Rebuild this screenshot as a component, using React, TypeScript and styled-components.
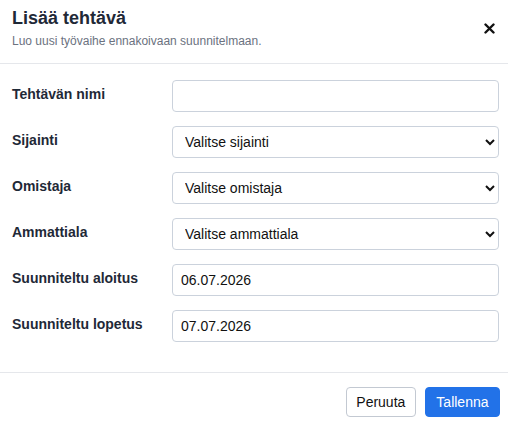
import styled, { createGlobalStyle } from "styled-components";

type FieldProps = {
  label: string;
  children: React.ReactNode;
};

const GlobalStyle = createGlobalStyle`
  body {
    margin: 0;
    background: #ffffff;
    font-family: "Liberation Sans", Arial, sans-serif;
    color: #1f2937;
  }
`;

const Field = ({ label, children }: FieldProps) => (
  <Row>
    <Label>{label}</Label>
    {children}
  </Row>
);

export default function App() {
  return (
    <>
      <GlobalStyle />
      <Dialog>
        <Header>
          <div>
            <Title>Lisää tehtävä</Title>
            <Subtitle>Luo uusi työvaihe ennakoivaan suunnitelmaan.</Subtitle>
          </div>
          <CloseButton aria-label="Sulje">
            <svg width="11" height="11" viewBox="0 0 11 11">
              <path
                d="M1.5 1.5 L9.5 9.5 M9.5 1.5 L1.5 9.5"
                stroke="#111"
                strokeWidth="2.4"
                strokeLinecap="round"
              />
            </svg>
          </CloseButton>
        </Header>
        <Body>
          <Field label="Tehtävän nimi">
            <TextInput type="text" defaultValue="" />
          </Field>
          <Field label="Sijainti">
            <Select defaultValue="">
              <option value="">Valitse sijainti</option>
            </Select>
          </Field>
          <Field label="Omistaja">
            <Select defaultValue="">
              <option value="">Valitse omistaja</option>
            </Select>
          </Field>
          <Field label="Ammattiala">
            <Select defaultValue="">
              <option value="">Valitse ammattiala</option>
            </Select>
          </Field>
          <Field label="Suunniteltu aloitus">
            <TextInput type="text" defaultValue="06.07.2026" />
          </Field>
          <Field label="Suunniteltu lopetus">
            <TextInput type="text" defaultValue="07.07.2026" />
          </Field>
        </Body>
        <Footer>
          <Button>Peruuta</Button>
          <Button primary>Tallenna</Button>
        </Footer>
      </Dialog>
    </>
  );
}

const Dialog = styled.div`
  width: 508px;
  height: 424px;
  display: flex;
  flex-direction: column;
  background: #fff;
`;

const Header = styled.div`
  display: flex;
  justify-content: space-between;
  align-items: flex-start;
  padding: 7px 9px 14px 12px;
  border-bottom: 1px solid #e5e7eb;
`;

const Title = styled.h2`
  margin: 0;
  font-size: 18px;
  line-height: 22px;
  font-weight: 700;
  color: #1f2937;
`;

const Subtitle = styled.p`
  margin: 5px 0 0;
  font-size: 12px;
  line-height: 15px;
  color: #6b7280;
`;

const CloseButton = styled.button`
  margin-top: 15px;
  padding: 0;
  border: 0;
  background: none;
  width: 20px;
  height: 12px;
  display: flex;
  align-items: center;
  justify-content: center;
  cursor: pointer;
`;

const Body = styled.div`
  display: flex;
  flex-direction: column;
  gap: 14px;
  padding: 16px 9px 30px 12px;
  border-bottom: 1px solid #e5e7eb;
`;

const Row = styled.div`
  display: grid;
  grid-template-columns: 160px 1fr;
  align-items: start;
`;

const Label = styled.label`
  padding-top: 5px;
  font-size: 14px;
  line-height: 18px;
  font-weight: 700;
  color: #1f2937;
`;

const TextInput = styled.input`
  box-sizing: border-box;
  height: 32px;
  width: 100%;
  padding: 0 8px;
  border: 1px solid #cbd2dc;
  border-radius: 4px;
  font-family: "Liberation Sans", Arial, sans-serif;
  font-size: 14px;
  color: #111;
  background: #fff;
`;

const Select = styled.select`
  box-sizing: border-box;
  height: 32px;
  width: 100%;
  padding: 0 4px 0 8px;
  border: 1px solid #cbd2dc;
  border-radius: 4px;
  font-family: "Liberation Sans", Arial, sans-serif;
  font-size: 14px;
  color: #111;
  background: #fff;
`;

const Footer = styled.div`
  display: flex;
  justify-content: flex-end;
  gap: 9px;
  padding: 14px 8px 8px 12px;
`;

const Button = styled.button<{ primary?: boolean }>`
  box-sizing: border-box;
  height: 30px;
  padding: 0 ${({ primary }) => (primary ? "10.5px" : "9.5px")};
  border-radius: 4px;
  border: 1px solid ${({ primary }) => (primary ? "#2272e8" : "#c3c9d2")};
  background: ${({ primary }) => (primary ? "#2272e8" : "#fff")};
  color: ${({ primary }) => (primary ? "#fff" : "#111")};
  font-family: "Liberation Sans", Arial, sans-serif;
  font-size: 14px;
  cursor: pointer;
`;
